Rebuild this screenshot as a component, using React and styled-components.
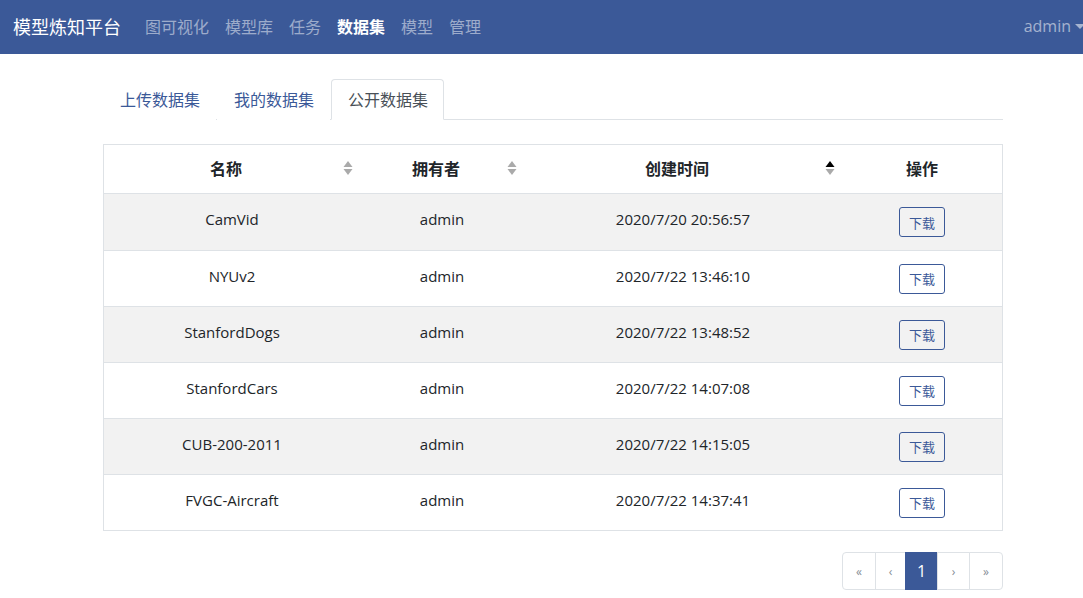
import React from 'react';
import styled, { createGlobalStyle } from 'styled-components';

const rows = [
  { name: 'CamVid', owner: 'admin', time: '2020/7/20 20:56:57' },
  { name: 'NYUv2', owner: 'admin', time: '2020/7/22 13:46:10' },
  { name: 'StanfordDogs', owner: 'admin', time: '2020/7/22 13:48:52' },
  { name: 'StanfordCars', owner: 'admin', time: '2020/7/22 14:07:08' },
  { name: 'CUB-200-2011', owner: 'admin', time: '2020/7/22 14:15:05' },
  { name: 'FVGC-Aircraft', owner: 'admin', time: '2020/7/22 14:37:41' },
];

const navItems = ['图可视化', '模型库', '任务', '数据集', '模型', '管理'];
const tabs = ['上传数据集', '我的数据集', '公开数据集'];
const columns = [
  { title: '名称', sort: 'none' },
  { title: '拥有者', sort: 'none' },
  { title: '创建时间', sort: 'asc' },
  { title: '操作' },
];

const Global = createGlobalStyle`
  body {
    margin: 0;
    background: #fff;
    font-family: "Open Sans", "Noto Sans CJK SC", sans-serif;
    font-size: 15px;
    color: #212529;
  }
  * { box-sizing: border-box; }
`;

const Navbar = styled.nav`
  height: 54px;
  background: #3b5998;
  display: flex;
  align-items: center;
  padding: 0 0 2px 13px;
`;

const Brand = styled.div`
  color: #fff;
  font-size: 18px;
  margin-right: 16px;
`;

const NavLink = styled.a`
  padding: 0 8px;
  font-size: 16px;
  color: ${(p) => (p.active ? '#fff' : 'rgba(255,255,255,0.5)')};
  font-weight: ${(p) => (p.active ? 600 : 400)};
`;

const User = styled.div`
  margin-left: auto;
  color: rgba(255,255,255,0.55);
  font-size: 16px;
  display: flex;
  align-items: center;
  gap: 4px;
  margin-right: -2px;
`;

const Caret = styled.span`
  width: 0;
  height: 0;
  border-left: 5px solid transparent;
  border-right: 5px solid transparent;
  border-top: 5px solid rgba(255,255,255,0.55);
`;

const Container = styled.main`
  width: 900px;
  margin: 25px 0 0 103px;
`;

const Tabs = styled.div`
  display: flex;
  border-bottom: 1px solid #dee2e6;
`;

const Tab = styled.div`
  height: 41px;
  padding: 0 15px 2px 16px;
  display: flex;
  align-items: center;
  margin-bottom: -1px;
  margin-right: 1px;
  font-size: 16px;
  border: 1px solid ${(p) => (p.active ? '#dee2e6' : 'transparent')};
  border-bottom-color: ${(p) => (p.active ? '#fff' : 'transparent')};
  border-radius: 4px 4px 0 0;
  background: #fff;
  color: ${(p) => (p.active ? '#495057' : '#3b5998')};
`;

const Table = styled.div`
  margin-top: 24px;
  border: 1px solid #dee2e6;
`;

const Row = styled.div`
  display: grid;
  grid-template-columns: 256px 164px 318px 1fr;
  height: ${(p) => (p.head ? 49 : 56)}px;
  background: ${(p) => (p.striped ? '#f2f2f2' : '#fff')};
  border-top: ${(p) => (p.first ? 'none' : '1px solid #dee2e6')};
  border-bottom: ${(p) => (p.head ? '1px solid #dee2e6' : 'none')};
`;

const Th = styled.div`
  position: relative;
  display: flex;
  align-items: center;
  justify-content: center;
  font-weight: 700;
  font-size: 16px;
  padding-bottom: 2px;
  padding-right: ${(p) => (p.sortable ? 12 : 0)}px;
`;

const Td = styled.div`
  display: flex;
  align-items: center;
  justify-content: center;
  font-size: 15px;
  padding-bottom: ${(p) => (p.action ? 0 : 6)}px;
`;

const SortIcon = styled.svg`
  position: absolute;
  right: 7px;
  top: 50%;
  margin-top: -9px;
`;

const Button = styled.button`
  font-family: inherit;
  font-size: 13px;
  color: #3b5998;
  background: transparent;
  border: 1px solid #3b5998;
  border-radius: 3px;
  width: 46px;
  height: 30px;
  padding: 0;
`;

const Pager = styled.ul`
  list-style: none;
  display: flex;
  justify-content: flex-end;
  margin: 21px 0 0;
  padding: 0;
`;

const Page = styled.li`
  width: ${(p) => p.w}px;
  height: 38px;
  display: flex;
  align-items: center;
  justify-content: center;
  border: 1px solid #dee2e6;
  margin-left: -1px;
  font-size: ${(p) => (p.active ? 16 : 12)}px;
  color: ${(p) => (p.active ? '#fff' : '#868e96')};
  background: ${(p) => (p.active ? '#3b5998' : '#fff')};
  border-color: ${(p) => (p.active ? '#3b5998' : '#dee2e6')};
  &:first-child { border-radius: 4px 0 0 4px; }
  &:last-child { border-radius: 0 4px 4px 0; }
`;

function Sort({ dir }) {
  return (
    <SortIcon width="10" height="16" viewBox="0 0 10 16">
      <path d="M5 1 L9.5 7 L0.5 7 Z" fill={dir === 'asc' ? '#000' : '#aaa'} />
      <path d="M5 15 L9.5 9 L0.5 9 Z" fill="#aaa" />
    </SortIcon>
  );
}

export default function App() {
  return (
    <>
      <Global />
      <Navbar>
        <Brand>模型炼知平台</Brand>
        {navItems.map((n) => (
          <NavLink key={n} active={n === '数据集'}>{n}</NavLink>
        ))}
        <User>admin<Caret /></User>
      </Navbar>
      <Container>
        <Tabs>
          {tabs.map((t, i) => (
            <Tab key={t} active={i === 2}>{t}</Tab>
          ))}
        </Tabs>
        <Table>
          <Row head first>
            {columns.map((c) => (
              <Th key={c.title} sortable={!!c.sort}>
                {c.title}
                {c.sort && <Sort dir={c.sort} />}
              </Th>
            ))}
          </Row>
          {rows.map((r, i) => (
            <Row key={r.name} striped={i % 2 === 0} first={i === 0}>
              <Td>{r.name}</Td>
              <Td>{r.owner}</Td>
              <Td>{r.time}</Td>
              <Td action><Button>下载</Button></Td>
            </Row>
          ))}
        </Table>
        <Pager>
          <Page w={34}>«</Page>
          <Page w={31}>‹</Page>
          <Page w={33} active>1</Page>
          <Page w={33}>›</Page>
          <Page w={34}>»</Page>
        </Pager>
      </Container>
    </>
  );
}
